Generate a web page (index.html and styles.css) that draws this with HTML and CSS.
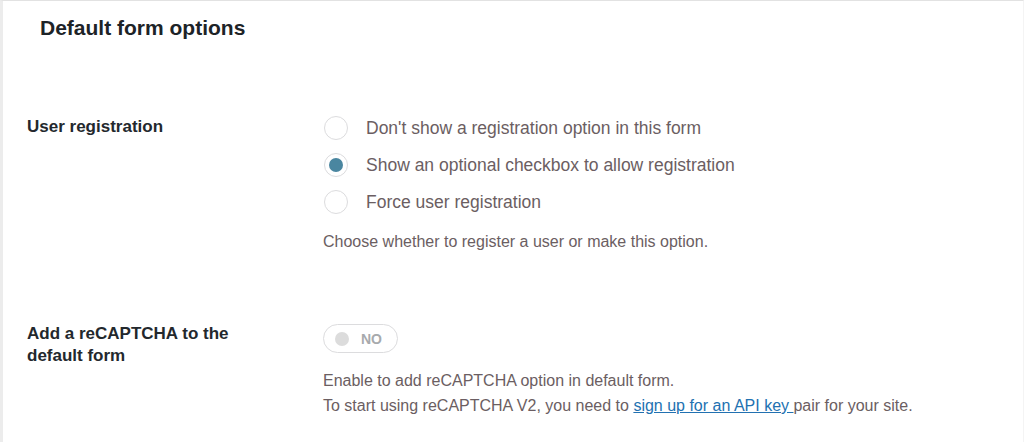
FILE: index.html
```html
<!DOCTYPE html>
<html>
<head>
<meta charset="utf-8">
<link rel="stylesheet" href="styles.css">
</head>
<body>
<div class="page">
  <h2 class="title">Default form options</h2>
  <div class="row row-reg">
    <div class="label">User registration</div>
    <div class="field">
      <div class="radios">
        <label class="radio"><span class="dot"></span><span>Don't show a registration option in this form</span></label>
        <label class="radio"><span class="dot checked"></span><span>Show an optional checkbox to allow registration</span></label>
        <label class="radio"><span class="dot"></span><span>Force user registration</span></label>
      </div>
      <p class="desc desc-reg">Choose whether to register a user or make this option.</p>
    </div>
  </div>
  <div class="row row-cap">
    <div class="label">Add a reCAPTCHA to the<br>default form</div>
    <div class="field">
      <div class="toggle"><span class="knob"></span><span class="toggle-text">NO</span></div>
      <div class="desc desc-cap">
        <p>Enable to add reCAPTCHA option in default form.</p>
        <p>To start using reCAPTCHA V2, you need to <a href="#">sign up for an API key </a>pair for your site.</p>
      </div>
    </div>
  </div>
</div>
</body>
</html>
```
FILE: styles.css
```css
html, body {
  margin: 0;
  padding: 0;
  background: #fff;
}
body {
  font-family: "Liberation Sans", Arial, sans-serif;
  width: 1024px;
  height: 442px;
  overflow: hidden;
}
.page {
  box-sizing: border-box;
  height: 442px;
  border-top: 1px solid #e2e2e2;
  border-left: 3px solid #ececec;
  border-right: 1px solid #f4f4f4;
  padding: 0 0 0 24px;
}
.title {
  margin: 0;
  padding: 15px 0 0 13px;
  font-size: 21px;
  line-height: 24px;
  font-weight: bold;
  color: #1d2327;
}
.row {
  display: flex;
}
.label {
  width: 296px;
  font-size: 17px;
  font-weight: bold;
  color: #23282d;
  line-height: 22px;
}
.row-reg {
  margin-top: 76px;
}
.field {
  display: flex;
  flex-direction: column;
}
.radios {
  display: flex;
  flex-direction: column;
  gap: 13px;
}
.radio {
  display: flex;
  align-items: center;
  gap: 18px;
  font-size: 17.5px;
  color: #6b5e62;
  line-height: 24px;
  padding-left: 1px;
}
.dot {
  box-sizing: border-box;
  width: 24px;
  height: 24px;
  border-radius: 50%;
  border: 1px solid #dcdcde;
  background: #fff;
  display: flex;
  align-items: center;
  justify-content: center;
}
.dot.checked::after {
  content: "";
  width: 14px;
  height: 14px;
  border-radius: 50%;
  background: #4a86a0;
}
.desc {
  margin: 0;
  font-size: 16px;
  color: #6b5e62;
  line-height: 25px;
}
.desc-reg {
  margin-top: 15px;
}
.row-cap {
  margin-top: 69px;
}
.toggle {
  box-sizing: border-box;
  width: 75px;
  height: 29px;
  margin-top: 1px;
  border: 1px solid #dcdcde;
  border-radius: 15px;
  display: flex;
  align-items: center;
  padding-left: 11px;
  gap: 12px;
}
.knob {
  width: 14px;
  height: 14px;
  border-radius: 50%;
  background: #dcdcdc;
}
.toggle-text {
  font-size: 14px;
  font-weight: bold;
  color: #a7aaad;
}
.desc-cap {
  margin-top: 15px;
}
.desc-cap p {
  margin: 0;
}
.desc a {
  color: #2271b1;
  text-decoration: underline;
}
```
